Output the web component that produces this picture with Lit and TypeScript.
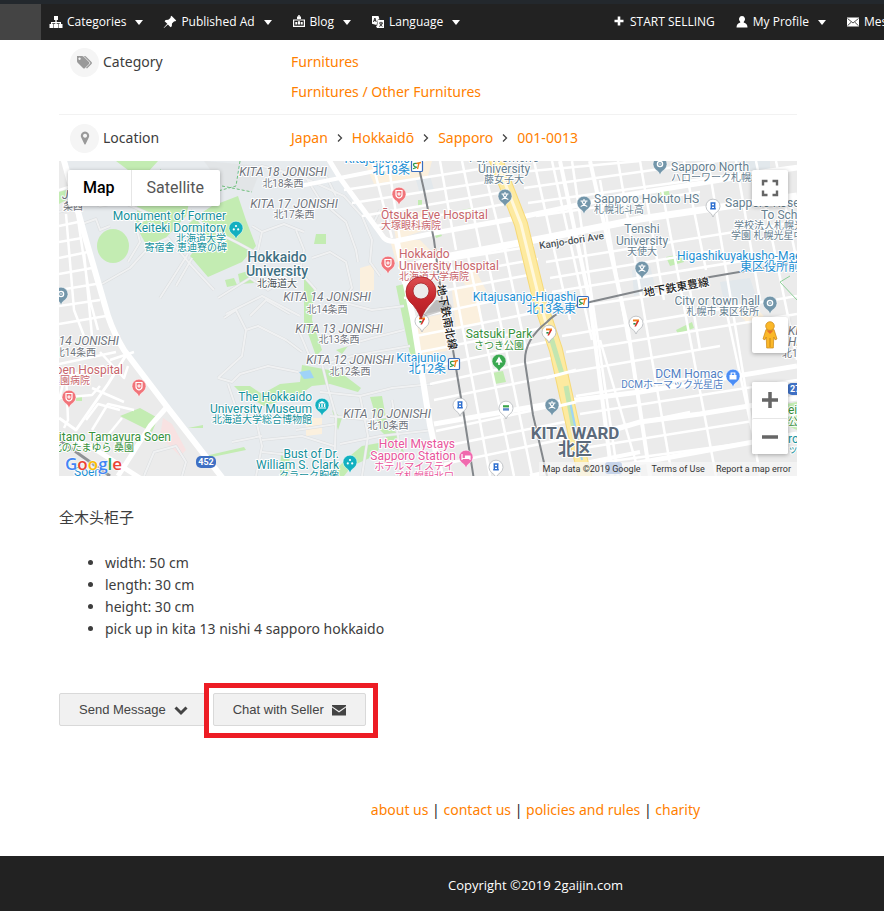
import { LitElement, html, svg, css } from "lit";
import { customElement } from "lit/decorators.js";

type Anchor = "start" | "middle" | "end";
type Label = [string, number, number, Anchor, string, string];

/* text, x, baseline, anchor, size class, tone class */
const LABELS: Label[] = [
  ["J", 62, 199, "start", "block", "grey"],
  ["条西", 83, 210, "end", "cjk", "grey"],
  ["KITA 18 JONISHI", 283, 176, "middle", "block", "grey"],
  ["北18条西", 283, 187, "middle", "cjk", "grey"],
  ["KITA 17 JONISHI", 294, 208, "middle", "block", "grey"],
  ["北17条西", 294, 218, "middle", "cjk", "grey"],
  ["KITA 14 JONISHI", 327, 301, "middle", "block", "grey"],
  ["北14条西", 327, 313, "middle", "cjk", "grey"],
  ["KITA 13 JONISHI", 339, 333, "middle", "block", "grey"],
  ["北13条西", 339, 343, "middle", "cjk", "grey"],
  ["KITA 12 JONISHI", 350, 364, "middle", "block", "grey"],
  ["北12条西", 350, 375, "middle", "cjk", "grey"],
  ["KITA 10 JONISHI", 387, 418, "middle", "block", "grey"],
  ["北10条西", 388, 429, "middle", "cjk", "grey"],
  ["14 JONISHI", 119, 345, "end", "block", "grey"],
  ["北14条西", 96, 356, "end", "cjk", "grey"],
  ["KITA 7", 788, 335, "start", "block", "grey"],
  ["HIGA", 788, 346, "start", "block", "grey"],
  ["北1条", 782, 357, "start", "cjk", "grey"],
  ["Monument of Former", 226, 220, "end", "poi", "teal"],
  ["Keiteki Dormitory", 226, 232, "end", "poi", "teal"],
  ["北海道大学", 226, 242, "end", "cjk", "teal"],
  ["寄宿舎 恵迪寮の碑", 227, 251, "end", "cjk", "teal"],
  ["The Hokkaido", 312, 401, "end", "poi", "teal"],
  ["University Museum", 312, 413, "end", "poi", "teal"],
  ["北海道大学総合博物館", 312, 423, "end", "cjk", "teal"],
  ["Bust of Dr.", 339, 458, "end", "poi", "teal"],
  ["William S. Clark", 339, 469, "end", "poi", "teal"],
  ["クラーク胸像", 339, 479, "end", "cjk", "teal"],
  ["ro", 788, 443, "start", "poi", "teal"],
  ["ッア", 788, 453, "start", "cjk", "teal"],
  ["Hokkaido", 277, 262, "middle", "campus", "harbor"],
  ["University", 277, 276, "middle", "campus", "harbor"],
  ["北海道大", 277, 287, "middle", "cjk", "dark"],
  ["Ōtsuka Eye Hospital", 381, 219, "start", "poi", "red"],
  ["大塚眼科病院", 381, 229, "start", "cjk", "red"],
  ["Hokkaido", 399, 258, "start", "poi", "red"],
  ["University Hospital", 399, 270, "start", "poi", "red"],
  ["北海道大学病院", 399, 280, "start", "cjk", "red"],
  ["Soen Hospital", 123, 374, "end", "poi", "red"],
  ["桑園病院", 90, 384, "end", "cjk", "red"],
  ["Fuji Women's", 504, 162, "middle", "poi", "slate"],
  ["University", 504, 173, "middle", "poi", "slate"],
  ["藤女子大", 504, 183, "middle", "cjk", "slate"],
  ["Sapporo North", 671, 171, "start", "poi", "slate"],
  ["ハローワーク札幌北", 671, 181, "start", "cjk", "slate"],
  ["Sapporo Hokuto HS", 594, 203, "start", "poi", "slate"],
  ["札幌北斗高", 594, 213, "start", "cjk", "slate"],
  ["Sapporo Kose", 725, 207, "start", "poi", "slate"],
  ["To School", 761, 219, "start", "poi", "slate"],
  ["学校法人札幌光", 734, 229, "start", "cjk", "slate"],
  ["学園 札幌光星中", 731, 239, "start", "cjk", "slate"],
  ["Tenshi", 642, 233, "middle", "poi", "slate"],
  ["University", 642, 245, "middle", "poi", "slate"],
  ["天使大", 642, 255, "middle", "cjk", "slate"],
  ["City or town hall", 760, 305, "end", "poi", "slate"],
  ["札幌市 東区役所", 759, 315, "end", "cjk", "slate"],
  ["Kitajunichijo", 410, 163, "end", "poi", "blue"],
  ["北18条", 410, 174, "end", "cjkbig", "blue"],
  ["Kitajusanjo-Higashi", 576, 301, "end", "poi", "blue"],
  ["北13条東", 576, 313, "end", "cjkbig", "blue"],
  ["Kitajunijo", 446, 362, "end", "poi", "blue"],
  ["北12条", 446, 373, "end", "cjkbig", "blue"],
  ["Higashikuyakusho-Mae", 677, 260, "start", "poi", "blue"],
  ["東区役所前", 740, 271, "start", "cjkbig", "blue"],
  ["Soen", 74, 476, "start", "poi", "blue"],
  ["Satsuki Park", 499, 338, "middle", "poi", "green"],
  ["さつき公園", 499, 349, "middle", "cjk", "green"],
  ["Kitano Tamayura Soen", 171, 441, "end", "poi", "green"],
  ["北のたまゆら 桑園", 134, 451, "end", "cjk", "green"],
  ["ei", 788, 414, "start", "poi", "green"],
  ["公園", 788, 425, "start", "cjk", "green"],
  ["DCM Homac", 723, 378, "end", "poi", "shop"],
  ["DCMホーマック光星店", 723, 388, "end", "cjk", "shop"],
  ["Hotel Mystays", 455, 448, "end", "poi", "pink"],
  ["Sapporo Station", 456, 460, "end", "poi", "pink"],
  ["ホテルマイステイ", 454, 470, "end", "cjk", "pink"],
  ["ズ札幌駅北口", 454, 480, "end", "cjk", "pink"],
  ["KITA WARD", 575, 439, "middle", "ward", "harbor2"],
  ["北区", 575, 455, "middle", "wardcjk", "harbor2"],
];

const GLYPHS: Record<string, unknown> = {
  cross: svg`<path d="M-3 -3.5H3V1Q3 3 0 4Q-3 3 -3 1Z" fill="none" stroke="#fff" stroke-width="1.2"/><path d="M-1.8 0H1.8M0 -1.8V1.8" stroke="#fff" stroke-width="1.2"/>`,
  school: svg`<path d="M-3.5 -2H3.5M0 -4V-2M-2.2 -2Q-1 2 3.3 3.4M2.2 -2Q1 2 -3.3 3.4" fill="none" stroke="#fff" stroke-width="1.1"/>`,
  dots: svg`<circle cx="0" cy="-2" r="1.1" fill="#fff"/><circle cx="-2.2" cy="1.4" r="1.1" fill="#fff"/><circle cx="2.2" cy="1.4" r="1.1" fill="#fff"/>`,
  museum: svg`<path d="M-4 -1.5L0 -4L4 -1.5ZM-3.3 -1H-2V2H-3.3ZM-.7 -1H.7V2H-.7ZM2 -1H3.3V2H2ZM-4 2.4H4V3.6H-4Z" fill="#fff"/>`,
  ring: svg`<circle r="2.6" fill="none" stroke="#fff" stroke-width="1.4"/><circle r=".8" fill="#fff"/>`,
  tree: svg`<path d="M0 -4.5L3.5 1.5H.8V4H-.8V1.5H-3.5Z" fill="#fff"/>`,
  bed: svg`<path d="M-4 -3V3M-4 1.5H4V-1H-.5V1.5M4 1V3" fill="#fff" stroke="#fff" stroke-width="1.2"/>`,
  bag: svg`<path d="M-3.5 -1H3.5V3.5H-3.5Z" fill="#fff"/><path d="M-1.8 -1V-3H1.8V-1" fill="none" stroke="#fff" stroke-width="1.2"/>`,
  seven: svg`<path d="M-3 -3.5H3V-1.6H-3Z" fill="#ef7d1a"/><path d="M3 -2L0 3.5H-1.6L1 -2Z" fill="#d8322a"/><path d="M-2.6 0H-.4V1.6H-2.6Z" fill="#238a4b"/>`,
  bank: svg`<path d="M-2.5 -3H2.5M-1.7 -3V2.5M1.7 -3V2.5M-2.8 2.8H2.8M-1.7 0H1.7" stroke="#2e6fd0" stroke-width="1.4"/>`,
  mart: svg`<path d="M-3 -2.8H3V-.6H-3Z" fill="#3aa54a"/><path d="M-3 .2H3V2.6H-3Z" fill="#5b88c9"/>`,
};

/* x, y of the head, tone, glyph */
const PINS: [number, number, string, string][] = [
  [399, 194, "#f1747a", "cross"],
  [388, 263, "#f1747a", "cross"],
  [139, 386, "#f1747a", "cross"],
  [69, 397, "#f1747a", "cross"],
  [505, 196, "#7396aa", "school"],
  [584, 203, "#7396aa", "school"],
  [642, 268, "#7396aa", "school"],
  [552, 405, "#7396aa", "school"],
  [61, 294, "#7396aa", "ring"],
  [660, 164, "#7396aa", "ring"],
  [770, 303, "#7396aa", "ring"],
  [236, 228, "#12b0c0", "dots"],
  [350, 462, "#12b0c0", "dots"],
  [322, 405, "#12b0c0", "museum"],
  [713, 206, "#fff", "bank"],
  [460, 405, "#fff", "bank"],
  [496, 467, "#fff", "bank"],
  [506, 408, "#fff", "mart"],
  [422, 321, "#fff", "seven"],
  [636, 323, "#fff", "seven"],
  [549, 332, "#fff", "seven"],
  [499, 361, "#3aa850", "tree"],
  [733, 376, "#4a8df6", "bag"],
  [466, 457, "#f069ae", "bed"],
];

const CAMPUS_LANES = [
  "M59 212L74 208L84 198L100 206L122 202L150 214",
  "M82 224L96 219L100 230L110 226",
  "M102 284L130 268L150 246L168 238L190 264L214 290",
  "M128 262L140 242L136 226L150 214M190 210L204 226L238 243L262 256",
  "M176 286L192 258M160 298L188 254",
  "M218 298L250 278L268 290L282 282M226 314L262 296L300 316",
  "M252 226L262 232L258 250M262 232L284 224L304 232",
  "M238 174L262 166L300 176L344 196L362 216L372 240L370 262L380 276",
  "M300 168L320 200L346 222L356 250L358 262M326 176L336 196",
  "M312 258L330 252L346 262L352 288L344 298",
  "M296 230L304 250L300 272L316 290M380 210L372 226",
  "M218 378L242 356L246 330L258 326L286 340L302 352",
  "M218 378L232 382L240 374L268 366L298 372M228 384L236 408",
  "M246 330L236 310L224 318M250 316L266 300L290 314",
  "M296 324L312 362L322 364L328 388L336 416L334 476",
  "M320 392L360 396L392 388L432 384M326 364L352 356L410 346",
  "M344 346L372 338L404 330M334 300L372 310L404 306",
  "M330 416L370 420L418 410M340 444L380 436L434 430",
  "M296 430L336 424M262 440L302 436L334 446M236 408L256 420L262 446L256 476",
  "M144 476L154 452L176 446L186 462L182 476M360 396L368 436L362 476M392 400L400 448L396 476",
  "M262 436L232 442M262 452L336 460",
];

const WEST_STREETS = [
  "M59 190L72 186M59 226L78 222M59 242L82 238M59 258L88 252M59 274L92 268M59 290L96 284M59 306L100 300M59 324L106 316M59 364L116 352M59 378L104 366",
  "M66 214L74 310L84 336M76 206L90 300L98 330M59 400L66 372L68 420L64 428M84 252L92 336",
  "M59 398L92 395L100 386M100 352L124 378L128 366M110 360L134 352M92 388L124 402M86 420L98 404L120 410",
  "M92 430L108 404L134 410M104 440L122 418",
];

/* side streets of the eastern grid, running slightly uphill to the right */
const CROSS_STREETS: [number, number, number, number][] = [
  [344, 190, 486, 168], [352, 203, 500, 180], [362, 216, 510, 191], [376, 226, 512, 203],
  [398, 268, 534, 246], [402, 283, 538, 259], [404, 298, 540, 273], [412, 318, 546, 290],
  [416, 336, 548, 310], [420, 352, 552, 326], [426, 368, 556, 340], [430, 384, 560, 356],
  [434, 400, 562, 374], [436, 431, 572, 402], [440, 447, 574, 420], [444, 464, 578, 436],
  [520, 172, 640, 161], [524, 188, 797, 150], [528, 203, 797, 166], [536, 216, 700, 192],
  [546, 262, 797, 222], [550, 278, 720, 250], [552, 292, 797, 252], [556, 310, 700, 288],
  [562, 336, 797, 296], [566, 352, 797, 314], [570, 372, 720, 346], [576, 396, 690, 378],
  [580, 414, 797, 380], [582, 434, 690, 412], [584, 448, 797, 414], [590, 464, 797, 436],
];

const DOWN_STREETS: [number, number, number, number][] = [
  [372, 161, 392, 238], [388, 161, 400, 240], [440, 161, 456, 250], [462, 161, 482, 255],
  [482, 161, 504, 250], [450, 260, 490, 476], [468, 256, 514, 476], [486, 252, 532, 476],
  [504, 246, 526, 350], [534, 161, 570, 320], [552, 161, 592, 340], [572, 161, 618, 476],
  [600, 180, 628, 340], [618, 161, 672, 476], [640, 161, 664, 300], [662, 190, 716, 476],
  [684, 161, 706, 270], [708, 161, 760, 476], [736, 161, 760, 300], [756, 161, 797, 360],
  [724, 300, 752, 430], [690, 290, 700, 350], [600, 340, 640, 476], [776, 161, 797, 262],
];

const line = (l: number[]) => `M${l[0]} ${l[1]}L${l[2]} ${l[3]}`;

const ICONS: Record<string, unknown> = {
  sitemap: svg`<path d="M5 1h4v4H7.700v2H12v2h1.500v4h-4V9h1.200V8.200H7.700V9H9v4H5V9h1.300V8.200H3.300V9h1.200v4h-4V9H2V7h4.300V5H5z"/>`,
  pin: svg`<path d="M8.500.8l4.700 4.700-1.200 1-.8-.3L9 8.600l-.2 2.600-1.200 1L4.900 9.400 1 13l-.3-.3L4.300 8.800 1.600 6.200l1-1.200 2.700-.2L7.700 2.700 7.400 1.900z"/>`,
  blog: svg`<path d="M1.600 5h10.800v6.400H1.600z" fill="none" stroke="currentColor" stroke-width="1.200"/><path d="M6.300 0h1.400v1.500H9V4H5V1.500h1.300zM3.300 7h2v2.600h-2zM6 6.200h2v3.400H6zM8.700 7h2v2.600h-2z"/>`,
  language: svg`<path d="M1 1h6.500l1 3.500H7L5.500 10 1 8.800zM7 5h6v8H6l-1-2 1.200-.5z"/><path d="M2.400 7l1.500-4 1.300 4M3 5.600h1.800M8 8h4M10 6.800V8m-1.800 3.400Q11 10.600 11.300 8M8.900 8.600q.6 2 2.600 2.800" fill="none" stroke="#222" stroke-width=".9"/>`,
  plus: svg`<path d="M5.700 1.500h2.600v3.200h3.200v2.600H8.300v3.200H5.700V7.300H2.500V4.700h3.200z"/>`,
  user: svg`<path d="M7 1a3 3.200 0 0 1 1.800 5.800l-.1.700Q12.500 8.500 12.500 12.500h-11Q1.500 8.500 5.300 7.500l-.1-.7A3 3.200 0 0 1 7 1z"/>`,
  mail: svg`<path d="M1 2.500h12v9H1z"/><path d="M1.500 3.500L7 8l5.500-4.500M1.500 10.700l3.700-3.500m7.300 3.500L8.800 7.200" fill="none" stroke="#222" stroke-width=".8"/>`,
};

@customElement("site-icon")
class SiteIcon extends LitElement {
  static properties = { name: {} };
  declare name: string;
  static styles = css`
    :host { display: inline-flex; }
    .icon { width: 14px; height: 14px; fill: currentColor; }
  `;
  render() {
    return html`<svg class="icon" viewBox="0 0 14 14" aria-hidden="true">${ICONS[this.name]}</svg>`;
  }
}

@customElement("site-nav")
class SiteNav extends LitElement {
  static styles = css`
    :host { display: block; }
    .bar {
      display: grid;
      grid-template-columns: 41px 1fr 272px;
      height: 36px;
      border-top: 4px solid #23282d;
      background: #222;
      overflow: hidden;
    }
    .home { background: #444; }
    .group { display: flex; gap: 20px; align-items: center; padding-left: 8px; min-width: 0; }
    .last { padding-left: 0; }
    .item {
      display: flex;
      align-items: center;
      gap: 4px;
      color: #fff;
      font: 12px/18px "Open Sans", "Noto Sans", sans-serif;
      text-decoration: none;
      white-space: nowrap;
    }
    .caret {
      margin-left: 5px;
      border: 4px solid transparent;
      border-top: 5px solid #fff;
      border-bottom: 0;
    }
  `;
  item(icon: string, text: string, menu = true) {
    return html`<a class="item" href="#"><site-icon name=${icon}></site-icon><span>${text}</span>${menu ? html`<span class="caret"></span>` : ""}</a>`;
  }
  render() {
    return html`<nav class="bar">
      <div class="home"></div>
      <div class="group">
        ${this.item("sitemap", "Categories")}${this.item("pin", "Published Ad")}${this.item("blog", "Blog")}${this.item("language", "Language")}
      </div>
      <div class="group last">
        ${this.item("plus", "START SELLING", false)}${this.item("user", "My Profile")}${this.item("mail", "Messages", false)}
      </div>
    </nav>`;
  }
}

@customElement("location-map")
class LocationMap extends LitElement {
  static styles = css`
    :host { display: block; position: relative; height: 315px; overflow: hidden; font-family: Roboto, "Noto Sans CJK JP", sans-serif; }
    .canvas { display: block; width: 100%; height: 100%; }
    .label { paint-order: stroke; stroke: #fff; stroke-width: 2px; stroke-linejoin: round; }
    .block { font-size: 12px; font-style: italic; }
    .poi { font-size: 12px; }
    .cjk { font-size: 10px; }
    .cjkbig { font-size: 12px; }
    .campus { font-size: 14px; font-weight: 500; }
    .ward { font-size: 17px; font-weight: 700; }
    .wardcjk { font-size: 17px; font-weight: 700; }
    .road { font-size: 10px; font-weight: 500; }
    .rail { font-size: 11px; font-weight: 500; }
    .grey { fill: #6f747c; }
    .dark { fill: #4b5358; }
    .teal { fill: #15919c; }
    .harbor { fill: #3f7082; }
    .harbor2 { fill: #5c6b7c; }
    .red { fill: #c7656b; }
    .slate { fill: #66808f; }
    .blue { fill: #1d8fd3; }
    .green { fill: #37913c; }
    .shop { fill: #527fc4; }
    .pink { fill: #e8559c; }
    .black { fill: #222; }
    .badge { font-size: 9px; font-weight: 700; fill: #fff; }
    .card { background: #fff; border-radius: 2px; box-shadow: 0 1px 4px rgba(0, 0, 0, 0.3); }
    .types { position: absolute; left: 9px; top: 9px; display: flex; }
    .type { border: 0; background: none; padding: 0 16px 0 15px; height: 36px; font: 16px/36px Roboto, sans-serif; color: #565656; }
    .on { color: #000; font-weight: 500; border-right: 1px solid #e6e6e6; }
    .tools { position: absolute; right: 9px; top: 9px; bottom: 22px; display: flex; flex-direction: column; }
    .tool { display: flex; align-items: center; justify-content: center; width: 36px; height: 36px; padding: 0; border: 0; background: #fff; border-radius: 2px; }
    .full { margin-bottom: auto; }
    .zoom { margin-top: 29px; }
    .out { border-top: 1px solid #e6e6e6; }
    .logo { position: absolute; left: 6px; bottom: 0; font: 600 17px/24px "Open Sans", sans-serif; text-decoration: none; text-shadow: 0 0 2px #fff, 0 0 2px #fff, 0 0 1px #fff; }
    .g1 { color: #4285f4; }
    .g2 { color: #ea4335; }
    .g3 { color: #fbbc05; }
    .g4 { color: #34a853; }
    .legal { position: absolute; right: 0; bottom: 0; display: flex; gap: 11px; padding: 0 6px 0 4px; background: rgba(245, 245, 245, 0.75); font-size: 9px; line-height: 14px; color: #333; }
    .term { color: #333; text-decoration: none; }
  `;

  pin([x, y, tone, glyph]: [number, number, string, string]) {
    const white = tone === "#fff";
    return svg`<g transform="translate(${x} ${y})">
      <path d="M0 11Q-1 7.500 -4.500 5.500A7 7 0 1 1 4.500 5.500Q1 7.500 0 11Z" fill=${tone} stroke=${white ? "#b5b9bd" : "#fff"} stroke-width=${white ? 0.8 : 0.5}/>
      ${GLYPHS[glyph]}</g>`;
  }

  station(x: number, y: number) {
    return svg`<g transform="translate(${x} ${y})"><rect x="-5.500" y="-5.500" width="11" height="11" rx="1" fill="#fff" stroke="#3b6fc0" stroke-width="1.200"/>
      <path d="M0 -2.500Q-4 -3 -3.500 -1T-1 1T-4 2.800" fill="none" stroke="#2f9a4c" stroke-width="1.200"/><path d="M-.5 -2.500L4 -3.500M2 -3L.5 3" stroke="#ef7d1a" stroke-width="1.300"/></g>`;
  }

  render() {
    return html`
      <svg class="canvas" viewBox="59 161 738 315" preserveAspectRatio="xMidYMid slice" role="img" aria-label="Map of Sapporo">
        <rect x="-400" y="0" width="1700" height="700" fill="#ebebeb" />
        <path d="M63 161L112 320L128 352L170 408L222 476L442 476L430 425L413 320L397 246L386 240L336 172L326 161Z" fill="#e7ebee" />
        <path d="M163 418L172 424L186 450L180 456L160 436Z" fill="#f8e2e2" />
        <path d="M160 161H252L230 186L160 178Z" fill="#e7ebee" />
        <g fill="#c3ecb2">
          <path d="M116 161L158 161L148 172L128 170ZM138 192L192 190L186 216L160 244L148 248L136 226Z" />
          <ellipse cx="113" cy="246" rx="16" ry="17" />
          <path d="M212 206L238 196L246 220L256 246L242 262L208 277L190 256L198 246L208 240L186 226L200 214Z" />
          <path d="M225 280L234 278L237 285L227 287ZM238 274L248 271L254 283L240 284ZM316 234H326V244H314ZM304 272L314 290L312 320L322 350L316 356L304 322Z" />
          <path d="M396 286L404 284L412 318L420 364L412 364ZM302 365L340 372L361 388L358 392L330 384L312 386L298 396L264 406L240 392L234 386L250 386L262 394L280 384L300 382Z" />
          <path d="M370 397L382 396L390 440L380 430ZM336 350L348 346L342 354ZM332 410L342 418L338 430ZM120 416L140 408L158 418L152 432L140 426ZM205 456L244 447L246 450L212 457ZM188 428L203 425V428ZM386 426L396 432L404 452L386 446Z" />
          <path d="M492 373L503 371L506 382L495 384ZM656 190L668 188L670 196L658 198ZM666 257L682 254L684 262L670 266ZM676 330L692 322L694 328L678 334ZM418 200H422V206H418ZM434 233L440 231L442 236L436 238ZM462 210L472 208V212L464 214ZM76 396L82 396V401H76ZM786 404L797 402V430L788 426Z" />
          <path d="M345 460L362 446L384 442L374 456L352 466L344 476H330ZM281 452L290 454L288 476H280ZM59 192L66 190V200L59 204Z" />
        </g>
        <path d="M299 372L310 370L314 378L304 379Z" fill="#9fd3f7" />
        <g fill="#fbf0de">
          <path d="M364 161H432L428 176L374 184ZM392 216L430 210L436 226L396 240ZM390 240L420 240L436 256L396 262Z" />
          <path d="M414 320L452 312L450 350L422 356ZM452 290L478 284L482 322L456 330ZM470 260L486 290L476 300L462 280ZM360 268L374 264V290L360 294ZM306 418H322V434L306 436ZM734 308L750 302L764 316L748 324Z" />
        </g>
        <path d="M632 270L650 266L656 290L634 296ZM720 282L750 278L756 296L724 302ZM738 161H770V172H742ZM416 180L430 176L434 190L420 194Z" fill="#e2e8ec" />
        <path d="M204 161L262 166L252 192L222 186Z" fill="#dfe2e4" opacity=".7" />

        <g fill="none" stroke-linejoin="round">
          ${CAMPUS_LANES.map((d) => svg`<path d=${d} stroke="#dadddf" stroke-width="3"/>`)}
          ${CAMPUS_LANES.map((d) => svg`<path d=${d} stroke="#f0f1f2" stroke-width="2"/>`)}
          ${WEST_STREETS.map((d) => svg`<path d=${d} stroke="#fff" stroke-width="2.500"/>`)}
          ${CROSS_STREETS.map((l) => svg`<path d=${line(l)} stroke="#fff" stroke-width="2.500"/>`)}
          ${DOWN_STREETS.map((l) => svg`<path d=${line(l)} stroke="#fff" stroke-width="2.500"/>`)}
          <path d="M222 186L252 192M240 161L236 186L200 196L186 200L180 178L160 170" stroke="#6fc07c" stroke-dasharray="3 2" />
          <g stroke="#fff">
            <path d="M61 150L86 240L108 316Q114 334 124 350L168 408L224 480" stroke-width="6" />
            <path d="M59 434L90 446L140 478M118 476L150 426L166 408" stroke-width="5" />
            <path d="M59 418L76 430L108 384L128 352" stroke-width="3" />
            <path d="M326 155L340 178L384 238Q388 242 396 241L440 232L512 219L620 196L797 168" stroke-width="5" />
            <path d="M300 186L350 176L400 166L430 158" stroke-width="4" />
            <path d="M397 242L413 318L430 425L442 480" stroke-width="6" />
            <path d="M404 268L440 258L550 237L640 219L797 196" stroke-width="7" />
            <path d="M434 424L480 416L560 402L640 392L797 366" stroke-width="5" />
            <path d="M580 440L640 422L700 414L797 398M600 470L797 434" stroke-width="5" />
            <path d="M590 161L628 330L650 476M560 161L590 302L612 476" stroke-width="4" />
            <path d="M530 476L590 462L640 452" stroke-width="4" />
          </g>
          <path d="M494 155L521 224L540 302L556 350L576 440L586 480" stroke="#f6d978" stroke-width="14" />
          <path d="M494 155L521 224L540 302L556 350L576 440L586 480" stroke="#fdeaa0" stroke-width="12" />
          <path d="M494 155L521 224L540 302L548 330" stroke="#fff8dc" stroke-width="3" />
          <path d="M550 334L562 374M566 386L576 440" stroke="#c3e6b0" stroke-width="5" />
          <path d="M570 402L582 460" stroke="#9fd3f7" stroke-width="2" />
          <path d="M546 378L576 370M550 408L576 402" stroke="#fff" stroke-width="3" />
          <g stroke="#83878b" stroke-width="2">
            <path d="M416 155L424 190L434 240L442 300L453 350L464 416L474 480" />
            <path d="M548 480L533 415L525 362Q524 340 547 322Q560 308 590 302L643 290L710 277L797 262" />
          </g>
          <path d="M59 440L110 476" stroke="#8f9295" stroke-width="3" />
          <path d="M797 300L780 282L790 276" stroke="#8fd09a" />
        </g>

        ${this.station(417, 166)}${this.station(583, 302)}${this.station(454, 364)}
        ${PINS.map((p) => this.pin(p))}
        ${LABELS.map(([t, x, y, a, size, tone]) => svg`<text class="label ${size} ${tone}" x=${x} y=${y} text-anchor=${a}>${t}</text>`)}
        <text class="label road dark" text-anchor="middle" transform="translate(572 244) rotate(-9)">Kanjo-dori Ave</text>
        <text class="label rail black" text-anchor="middle" transform="translate(677 291) rotate(-10)">地下鉄東豊線</text>
        <text class="label rail black" text-anchor="middle" transform="translate(443 318) rotate(79)">地下鉄南北線</text>

        <rect x="196" y="456" width="20" height="12" rx="5" fill="#3f70c4" />
        <text class="badge" x="206" y="465" text-anchor="middle">452</text>
        <rect x="787" y="383" width="20" height="12" rx="5" fill="#3f70c4" />
        <text class="badge" x="790" y="392">274</text>
        <rect x="605" y="462" width="17" height="12" rx="3" fill="#3f70c4" />

        <defs>
          <linearGradient id="marker" x1="0" y1="0" x2="0" y2="1"><stop offset="0" stop-color="#dc5053" /><stop offset=".5" stop-color="#c8282e" /><stop offset="1" stop-color="#b01f24" /></linearGradient>
        </defs>
        <path d="M421 318L452 308Q450 299 436 300Z" fill="#000" opacity=".2" />
        <path d="M421 319Q417 308 410 302A15 15 0 1 1 432 302Q425 308 421 319Z" fill="url(#marker)" stroke="#a82226" stroke-width=".8" />
        <circle cx="421" cy="291" r="8" fill="#ececec" stroke="#a32024" stroke-width=".8" />
      </svg>

      <div class="types card">
        <button class="type on">Map</button><button class="type">Satellite</button>
      </div>
      <div class="tools">
        <button class="tool card full" aria-label="Toggle fullscreen">
          <svg width="18" height="18" viewBox="0 0 18 18"><path d="M2 6.500V2H6.500M11.500 2H16V6.500M16 11.500V16H11.500M6.500 16H2V11.500" fill="none" stroke="#666" stroke-width="2.400" /></svg>
        </button>
        <button class="tool card" aria-label="Street View">
          <svg width="18" height="28" viewBox="0 0 18 28"><path d="M5 8.500Q9 10 13 8.500L16 18L14 18.800L12.800 16L12.300 27H5.700L5.200 16L4 18.800L2 18Z" fill="#fbb829" stroke="#c98412" stroke-width=".7" /><path d="M5.500 9.500L9 13L12.500 9.500Z" fill="#e8702a" /><path d="M9 17V26" stroke="#c98412" /><circle cx="9" cy="5" r="4.300" fill="#fbb829" stroke="#c98412" stroke-width=".7" /></svg>
        </button>
        <div class="card zoom">
          <button class="tool" aria-label="Zoom in"><svg width="18" height="18" viewBox="0 0 18 18"><path d="M1 9H17M9 1V17" stroke="#666" stroke-width="3.500" /></svg></button>
          <button class="tool out" aria-label="Zoom out"><svg width="18" height="18" viewBox="0 0 18 18"><path d="M1 9H17" stroke="#666" stroke-width="3.500" /></svg></button>
        </div>
      </div>
      <a class="logo" href="#" aria-label="Google"><span class="g1">G</span><span class="g2">o</span><span class="g3">o</span><span class="g1">g</span><span class="g4">l</span><span class="g2">e</span></a>
      <div class="legal"><span>Map data ©2019 Google</span><a class="term" href="#">Terms of Use</a><a class="term" href="#">Report a map error</a></div>
    `;
  }
}

@customElement("app-root")
class AppRoot extends LitElement {
  static styles = css`
    :host {
      display: flex;
      flex-direction: column;
      min-height: 100vh;
      background: #fff;
      color: #3d3d3d;
      font: 14px/22px "Noto Sans", "Open Sans", "Noto Sans CJK SC", sans-serif;
    }
    a { color: #ff7f00; text-decoration: none; }
    .main { flex: 1; padding: 0 87px 0 59px; }
    .facts { margin: 0; }
    .fact { display: grid; grid-template-columns: 232px 1fr; padding: 7px 0; line-height: 30px; }
    .fact + .fact { padding: 8px 0; border-top: 1px solid #f2f2f2; }
    .term { display: flex; align-items: center; gap: 4px; height: 30px; padding-left: 11px; }
    .disc { display: flex; align-items: center; justify-content: center; width: 29px; height: 29px; border-radius: 50%; background: #f5f5f5; }
    .value { margin: 0; }
    .row { display: flex; align-items: center; }
    .sep { margin: 0 9px; }
    .about { margin: 30px 0 24px; font-size: 15px; }
    .specs { margin: 0; padding-left: 46px; }
    .actions { display: flex; gap: 5px; margin-top: 53px; }
    .button {
      display: flex;
      align-items: center;
      gap: 8px;
      height: 33px;
      padding: 0 19px;
      border: 1px solid #d9d9d9;
      border-radius: 2px;
      background: #f1f1f1;
      color: #444;
      font: 13px/20px "Liberation Sans", Arial, sans-serif;
    }
    .marked { position: relative; }
    .marked::after { content: ""; position: absolute; inset: -10px -12px -12px -9px; border: 5px solid #ed1c24; pointer-events: none; }
    .links { padding: 73px 0 35px 187px; text-align: center; color: #222; }
    .footer { padding: 20px 0 17px 187px; background: #222; color: #fff; text-align: center; font-size: 13px; line-height: 18px; font-family: "Open Sans", sans-serif; }
  `;
  sep() {
    return html`<svg class="sep" width="6" height="10" viewBox="0 0 6 10" aria-hidden="true"><path d="M1 1.500L4.500 5L1 8.500" fill="none" stroke="#444" stroke-width="1.300" /></svg>`;
  }
  render() {
    return html`
      <site-nav></site-nav>
      <main class="main">
        <dl class="facts">
          <div class="fact">
            <dt class="term">
              <span class="disc"><svg width="17" height="15" viewBox="0 0 17 15"><path fill-rule="evenodd" d="M1 1H6Q7 1 7.700 1.700L13 7Q14 8 13 9L9 13Q8 14 7 13L1.700 7.700Q1 7 1 6ZM3.500 2.500A1.200 1.200 0 1 0 3.600 2.500Z" fill="#999" /><path d="M7.800 1H9Q9.600 1 10.200 1.700L15.500 7Q16.500 8 15.500 9L11 13.500L10 12.800L14 8.800Q14.800 8 14 7.200Z" fill="#999" /></svg></span>
              Category
            </dt>
            <dd class="value"><div><a href="#">Furnitures</a></div><div><a href="#">Furnitures / Other Furnitures</a></div></dd>
          </div>
          <div class="fact">
            <dt class="term">
              <span class="disc"><svg width="10" height="14" viewBox="0 0 10 14"><path fill-rule="evenodd" d="M5 .5A4.300 4.300 0 0 1 9 6L5.700 13Q5 14 4.300 13L1 6A4.300 4.300 0 0 1 5 .5ZM5 2.700A2 2 0 1 0 5.100 2.700Z" fill="#999" /></svg></span>
              Location
            </dt>
            <dd class="value row"><a href="#">Japan</a>${this.sep()}<a href="#">Hokkaidō</a>${this.sep()}<a href="#">Sapporo</a>${this.sep()}<a href="#">001-0013</a></dd>
          </div>
        </dl>
        <location-map></location-map>
        <p class="about" lang="zh">全木头柜子</p>
        <ul class="specs">
          <li>width: 50 cm</li>
          <li>length: 30 cm</li>
          <li>height: 30 cm</li>
          <li>pick up in kita 13 nishi 4 sapporo hokkaido</li>
        </ul>
        <div class="actions">
          <button class="button">Send Message
            <svg width="14" height="14" viewBox="0 0 14 14" aria-hidden="true"><path d="M1.500 4.500L7 10L12.500 4.500" fill="none" stroke="#444" stroke-width="3" /></svg>
          </button>
          <div class="marked">
            <button class="button">Chat with Seller
              <svg width="14" height="12" viewBox="0 0 14 12" aria-hidden="true"><path d="M0 1H14V2.200L7 7L0 2.200ZM0 3.600L7 8.400L14 3.600V11.500H0Z" fill="#444" /></svg>
            </button>
          </div>
        </div>
      </main>
      <div class="links"><a href="#">about us</a> | <a href="#">contact us</a> | <a href="#">policies and rules</a> | <a href="#">charity</a></div>
      <footer class="footer">Copyright ©2019 2gaijin.com</footer>
    `;
  }
}
